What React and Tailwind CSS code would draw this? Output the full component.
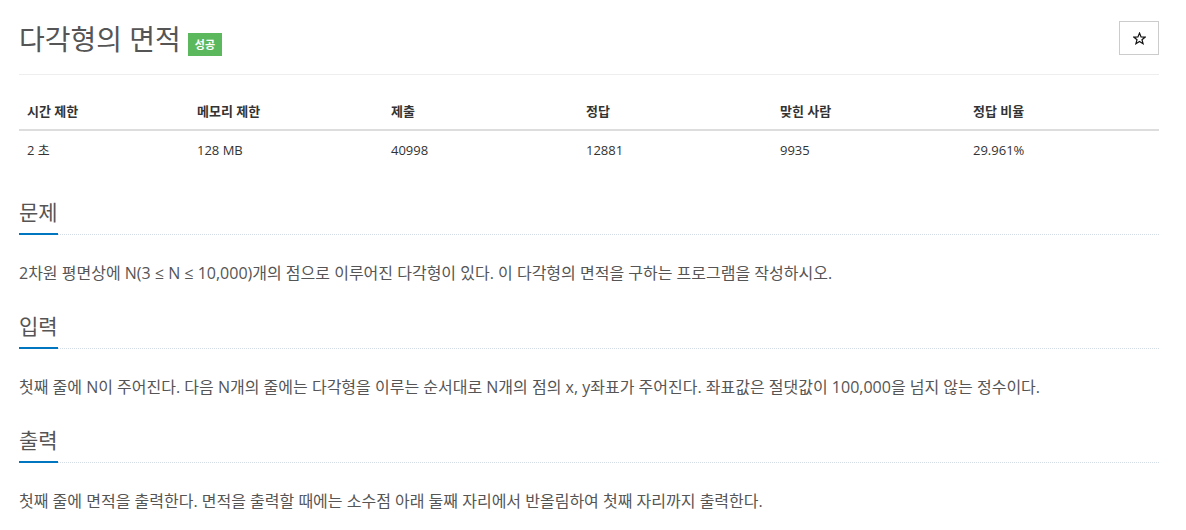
import React from 'react';

const font = { fontFamily: '"Open Sans", "Noto Sans CJK KR", sans-serif' };

const stats = [
  { label: '시간 제한', value: '2 초', w: 'w-[170px]' },
  { label: '메모리 제한', value: '128 MB', w: 'w-[194px]' },
  { label: '제출', value: '40998', w: 'w-[195px]' },
  { label: '정답', value: '12881', w: 'w-[194px]' },
  { label: '맞힌 사람', value: '9935', w: 'w-[193px]' },
  { label: '정답 비율', value: '29.961%', w: '' },
];

const sections = [
  {
    title: '문제',
    body: '2차원 평면상에 N(3 ≤ N ≤ 10,000)개의 점으로 이루어진 다각형이 있다. 이 다각형의 면적을 구하는 프로그램을 작성하시오.',
  },
  {
    title: '입력',
    body: '첫째 줄에 N이 주어진다. 다음 N개의 줄에는 다각형을 이루는 순서대로 N개의 점의 x, y좌표가 주어진다. 좌표값은 절댓값이 100,000을 넘지 않는 정수이다.',
  },
  {
    title: '출력',
    body: '첫째 줄에 면적을 출력한다. 면적을 출력할 때에는 소수점 아래 둘째 자리에서 반올림하여 첫째 자리까지 출력한다.',
  },
];

function Section({ title, body, first }) {
  return (
    <section className={first ? 'mt-[28px]' : 'mt-[26px]'}>
      <div className="flex items-end">
        <h2 className="whitespace-nowrap border-b-2 border-[#0076c0] pb-[6px] text-[21px] leading-[30px] text-[#555]">{title}</h2>
        <div className="flex-1 border-b border-dotted border-[#d3dce6]" />
      </div>
      <p className="mt-[26px] text-[16px] leading-[24px] text-[#555]">{body}</p>
    </section>
  );
}

export default function App() {
  return (
    <div className="h-[530px] overflow-hidden bg-white pl-[19px]" style={font}>
      <div className="w-[1140px]">
        {/* 제목 */}
        <div className="flex items-start justify-between border-b border-[#eee] pt-[20px] pb-[16px]">
          <div className="flex items-center">
            <h1 className="text-[28px] leading-[38px] text-[#555]">다각형의 면적</h1>
            <span className="ml-[7px] mt-[10px] bg-[#5cb85c] px-[7px] py-[4px] text-[11px] leading-[15px] font-bold text-white">
              성공
            </span>
          </div>
          <button className="mt-[1px] flex h-[34px] w-[40px] items-center justify-center border border-[#ccc]">
            <svg width="13" height="13" viewBox="0 0 24 24" fill="none" stroke="#111" strokeWidth="2.2" strokeLinejoin="miter">
              <polygon points="12,2 14.9,9 22.5,9.3 16.6,14.2 18.6,21.6 12,17.4 5.4,21.6 7.4,14.2 1.5,9.3 9.1,9" />
            </svg>
          </button>
        </div>

        {/* 통계 */}
        <table className="mt-[18px] w-full border-collapse text-[13px] text-[#333]">
          <thead>
            <tr>
              {stats.map((s) => (
                <th key={s.label} className={`${s.w} border-b-2 border-[#ddd] px-[8px] py-[8px] text-left font-bold leading-[20px]`}>
                  {s.label}
                </th>
              ))}
            </tr>
          </thead>
          <tbody>
            <tr>
              {stats.map((s) => (
                <td key={s.label} className="px-[8px] py-[9px] leading-[20px]">
                  {s.value}
                </td>
              ))}
            </tr>
          </tbody>
        </table>

        {sections.map((s, i) => (
          <Section key={s.title} first={i === 0} {...s} />
        ))}
      </div>
    </div>
  );
}
